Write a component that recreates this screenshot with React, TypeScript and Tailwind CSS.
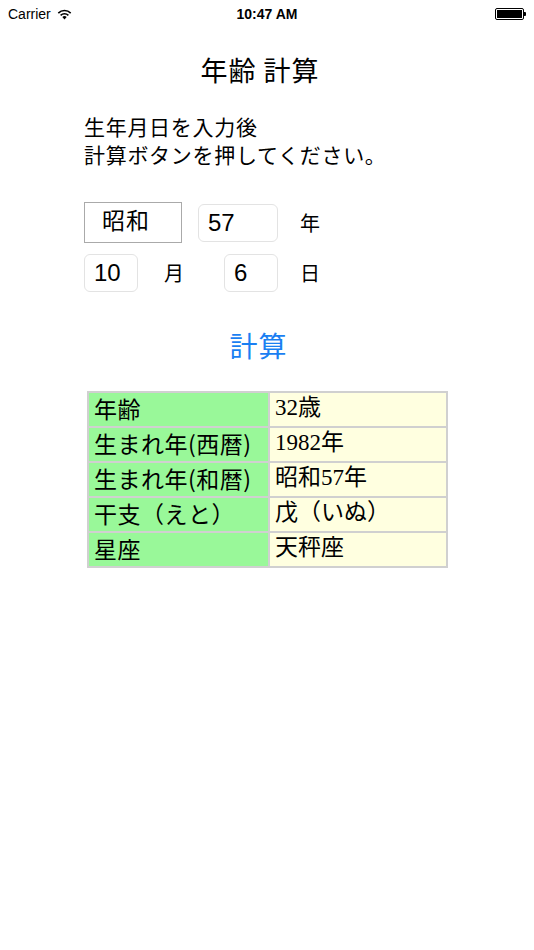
const sans = "font-['Helvetica','Liberation_Sans','Noto_Sans_CJK_JP',sans-serif]";
const cjk = "font-['Noto_Sans_CJK_JP','Liberation_Sans',sans-serif]";

const rows: [string, string][] = [
  ['年齢', '32歳'],
  ['生まれ年(西暦)', '1982年'],
  ['生まれ年(和暦)', '昭和57年'],
  ['干支（えと）', '戊（いぬ）'],
  ['星座', '天秤座'],
];

function StatusBar() {
  return (
    <div className={`grid grid-cols-3 items-center h-[28px] px-[8px] text-[14px] text-black ${sans}`}>
      <div className="flex items-center gap-[6px]">
        <span>Carrier</span>
        <svg width="15" height="11" viewBox="0 0 15 11">
          <path d="M7.5 10.5 L5.3 8.1 A3.2 3.2 0 0 1 9.7 8.1 Z" fill="#000" />
          <path d="M3.6 6.4 A5.6 5.6 0 0 1 11.4 6.4" stroke="#000" strokeWidth="1.6" fill="none" />
          <path d="M1.3 4.1 A8.8 8.8 0 0 1 13.7 4.1" stroke="#000" strokeWidth="1.6" fill="none" />
        </svg>
      </div>
      <div className="text-center font-semibold">10:47 AM</div>
      <div className="flex justify-end items-center">
        <div className="w-[29px] h-[12px] border border-black rounded-[2px] p-[1px]">
          <div className="w-full h-full bg-black" />
        </div>
        <div className="w-[2px] h-[4px] bg-black rounded-r-[1px]" />
      </div>
    </div>
  );
}

function NumBox({ value, className }: { value: string; className: string }) {
  return (
    <div className={`h-[38px] border border-[#e3e3e3] rounded-[6px] flex items-center pl-[9px] text-[24px] text-black ${sans} ${className}`}>
      {value}
    </div>
  );
}

export default function App() {
  return (
    <div className="w-[534px] h-[950px] bg-white text-black">
      <StatusBar />

      <h1 className={`mt-[27px] text-center text-[27px] leading-[30px] tracking-[1px] pr-[14px] ${cjk}`}>年齢 計算</h1>

      <p className={`mt-[27px] pl-[84px] text-[21px] leading-[28px] tracking-[0.7px] ${cjk}`}>
        生年月日を入力後
        <br />
        計算ボタンを押してください。
      </p>

      <div className="mt-[34px] pl-[84px] flex items-center">
        <div className={`w-[98px] h-[41px] border-[1.5px] border-[#aaaaaa] text-[23px] leading-[28px] pl-[17px] pt-[2px] tracking-[1px] ${cjk}`}>
          昭和
        </div>
        <NumBox value="57" className="ml-[16px] w-[80px]" />
        <span className={`ml-[22px] text-[20px] ${cjk}`}>年</span>
      </div>

      <div className="mt-[11px] pl-[84px] flex items-center">
        <NumBox value="10" className="w-[54px]" />
        <span className={`ml-[26px] text-[20px] ${cjk}`}>月</span>
        <NumBox value="6" className="ml-[40px] w-[54px]" />
        <span className={`ml-[22px] text-[20px] ${cjk}`}>日</span>
      </div>

      <div className="mt-[36px] flex justify-center pr-[17px]">
        <button className={`text-[28px] leading-[34px] text-[#1a7ff2] tracking-[1px] ${cjk}`}>計算</button>
      </div>

      <table className="mt-[29px] ml-[87px] w-[361px] border-collapse">
        <tbody>
          {rows.map(([label, value]) => (
            <tr key={label} className="h-[35px]">
              <td className={`w-[181px] bg-[#99f899] border-2 border-[#d0d0d0] pl-[5px] pb-[3px] text-[23px] leading-[28px] tracking-[0.5px] ${cjk}`}>
                {label}
              </td>
              <td className={`bg-[#ffffe0] border-2 border-[#d0d0d0] pl-[5px] pb-[3px] text-[23px] leading-[28px] font-['Liberation_Serif','Noto_Sans_CJK_JP',serif]`}>
                {value}
              </td>
            </tr>
          ))}
        </tbody>
      </table>
    </div>
  );
}
